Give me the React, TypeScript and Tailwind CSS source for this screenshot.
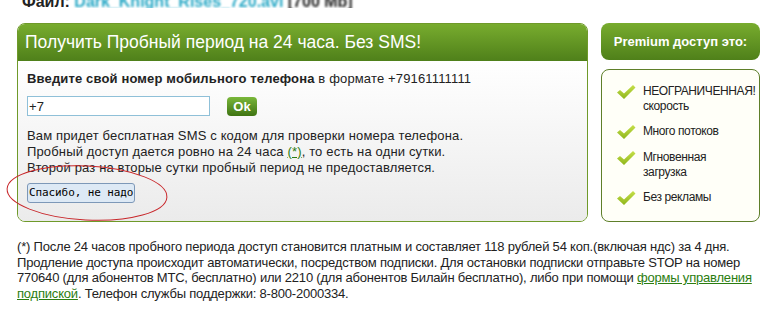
import React from 'react';

const features = [
  ['НЕОГРАНИЧЕННАЯ!', 'скорость'],
  ['Много потоков'],
  ['Мгновенная', 'загрузка'],
  ['Без рекламы'],
];

function Check() {
  return (
    <svg width="20" height="16" viewBox="0 0 20 16" className="shrink-0">
      <defs>
        <linearGradient id="chk" x1="0" y1="0" x2="0" y2="1">
          <stop offset="0" stopColor="#c6e04a" />
          <stop offset="1" stopColor="#8fb61c" />
        </linearGradient>
      </defs>
      <path d="M1 8.5 L4 6 L8 9.5 L17 1 L19.5 3.5 L8 15 Z" fill="url(#chk)" />
    </svg>
  );
}

export default function App() {
  return (
    <div
      className="relative w-[766px] h-[321px] overflow-hidden bg-white text-[#222]"
      style={{ fontFamily: '"Liberation Sans", Arial, sans-serif' }}
    >
      {/* cut-off file line */}
      <div className="h-[8px] overflow-hidden relative">
        <div className="absolute left-[22px] top-[-10px] text-[16px] font-bold whitespace-nowrap">
          Файл: <span className="text-[#2aa9c6] blur-[1px]">Dark_Knight_Rises_720.avi</span>{' '}
          <span className="blur-[1px]">[700 Mb]</span>
        </div>
      </div>

      <div className="flex gap-[13px] pl-[17px] pt-[15px]">
        {/* main panel */}
        <div className="w-[571px] h-[199px] flex flex-col rounded-[8px] border border-[#6f9a2a] overflow-hidden">
          <div className="h-[37px] shrink-0 bg-gradient-to-b from-[#78ac2e] to-[#4f801a] flex items-center pl-[7px] text-white text-[17.5px]">
            Получить Пробный период на 24 часа. Без SMS!
          </div>
          <div className="flex-1 bg-gradient-to-b from-white to-[#ebebeb] px-[9px] pt-[10px] text-[13px] tracking-[0.15px] whitespace-nowrap">
            <div className="leading-[16px]">
              <b>Введите свой номер мобильного телефона</b> в формате +79161111111
            </div>
            <div className="flex items-center gap-[17px] mt-[9px]">
              <input
                defaultValue="+7"
                className="w-[183px] h-[20px] border border-[#8fc0d8] bg-white px-[1px] text-[13px] outline-none"
              />
              <button className="w-[30px] h-[19px] rounded-[4px] bg-gradient-to-b from-[#7ab83a] to-[#3f7412] text-white font-bold text-[13px] leading-none">
                Ok
              </button>
            </div>
            <div className="mt-[12px] leading-[16px]">
              <div>Вам придет бесплатная SMS с кодом для проверки номера телефона.</div>
              <div>
                Пробный доступ дается ровно на 24 часа{' '}
                <a className="text-[#2b7d10] underline">(*)</a>, то есть на одни сутки.
              </div>
              <div>Второй раз на вторые сутки пробный период не предоставляется.</div>
            </div>
            <button
              className="mt-[7px] h-[20px] px-[1px] rounded-[3px] border border-[#7d98b8] bg-[#dde9f5] text-[11px] text-black tracking-[-0.1px]"
              style={{ fontFamily: '"DejaVu Sans Mono", monospace' }}
            >
              Спасибо, не надо
            </button>
          </div>
        </div>

        {/* right panel */}
        <div className="w-[159px] flex flex-col gap-[9px]">
          <div className="h-[37px] rounded-[8px] bg-gradient-to-b from-[#78ac2e] to-[#4f801a] flex items-center justify-center text-white font-bold text-[13px]">
            Premium доступ это:
          </div>
          <div className="h-[153px] rounded-[8px] border border-[#5e7f2a] bg-[#fffff8] pl-[14px] pt-[14px] flex flex-col gap-[10px] text-[12px] tracking-[-0.4px] leading-[15px] whitespace-nowrap">
            {features.map((f) => (
              <div key={f[0]} className="flex items-start gap-[7px]">
                <Check />
                <div>
                  {f.map((l) => (
                    <div key={l}>{l}</div>
                  ))}
                </div>
              </div>
            ))}
          </div>
        </div>
      </div>

      {/* footer */}
      <div className="pl-[17px] mt-[17px] text-[13px] leading-[15.5px] tracking-[-0.2px] whitespace-nowrap">
        <div>
          (*) После 24 часов пробного периода доступ становится платным и составляет 118 рублей 54 коп.(включая ндс) за 4 дня.
        </div>
        <div>
          Продление доступа происходит автоматически, посредством подписки. Для остановки подписки отправьте STOP на номер
        </div>
        <div>
          770640 (для абонентов МТС, бесплатно) или 2210 (для абонентов Билайн бесплатно), либо при помощи{' '}
          <a className="text-[#2b7d10] underline">формы управления</a>
        </div>
        <div>
          <a className="text-[#2b7d10] underline">подпиской</a>. Телефон службы поддержки: 8-800-2000334.
        </div>
      </div>

      {/* red ellipse annotation */}
      <svg className="absolute left-0 top-0 pointer-events-none" width="766" height="321">
        <ellipse cx="87" cy="193" rx="80" ry="27" fill="none" stroke="#c8262a" strokeWidth="1" transform="rotate(3 87 193)" />
      </svg>
    </div>
  );
}
